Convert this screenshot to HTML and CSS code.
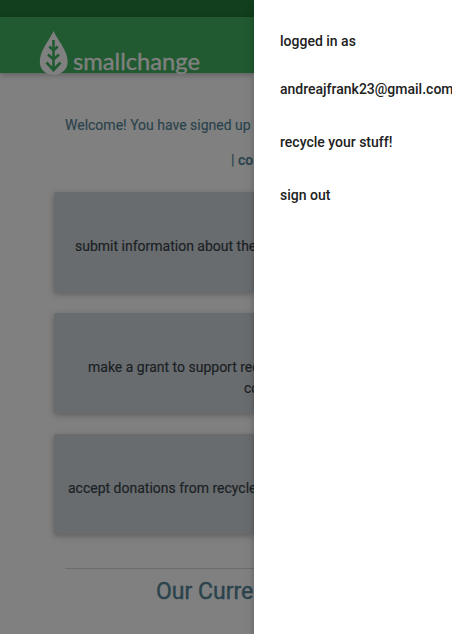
FILE: index.html
```html
<!DOCTYPE html>
<html lang="en">
<head>
<meta charset="utf-8">
<title>smallchange</title>
<link rel="stylesheet" href="styles.css">
</head>
<body>
<div class="page">
  <div class="status-bar"></div>
  <header class="navbar">
    <svg class="logo" width="170" height="50" viewBox="0 0 170 50">
      <path class="leaf" d="M14.500 1C12 8 .8 20 .8 31.500C.8 40 7 44.800 14.500 44.800S28.700 40 28.700 31.500C28.700 20 17 8 14.500 1Z"/>
      <path class="veins" d="M14.500 10V39M10.300 16.500L14.500 20.500L18.700 16.500M9 24.500L14.500 29.500L20 24.500M7.500 32.500L14.500 40L21.500 32.500"/>
      <text class="wordmark" x="34" y="39.500" textLength="127" lengthAdjust="spacingAndGlyphs">smallchange</text>
    </svg>
  </header>
  <main class="content">
    <p class="notice">Welcome! You have signed up</p>
    <p class="links">| <b>co</b></p>
    <div class="card"><p class="submit">submit information about the</p></div>
    <div class="card"><p class="grant">make a grant to support rec</p><p class="grant-more">co</p></div>
    <div class="card"><p class="accept">accept donations from recycle</p></div>
    <hr class="rule">
    <h5 class="heading">Our Curre</h5>
  </main>
</div>
<nav class="drawer">
  <span class="label">logged in as</span>
  <a class="item">andreajfrank23@gmail.com</a>
  <a class="item">recycle your stuff!</a>
  <a class="item">sign out</a>
</nav>
</body>
</html>
```
FILE: styles.css
```css
* { box-sizing: border-box; }
body {
  margin: 0;
  height: 634px;
  overflow: hidden;
  display: flex;
  font: 14px/21px Roboto, sans-serif;
  background: #808080;
}
p, h5 { margin: 0; white-space: nowrap; }
.page { width: 254px; flex: none; height: 634px; overflow: hidden; }
.status-bar { height: 17px; background: #123f1e; }
.navbar {
  height: 56px;
  padding: 13px 0 0 39px;
  background: #215a30;
  box-shadow: 0 2px 5px rgba(0,0,0,.16), 0 1px 6px rgba(0,0,0,.12);
}
.logo { display: block; overflow: visible; }
.leaf { fill: #808080; }
.veins { fill: none; stroke: #215a30; stroke-width: 2.6; }
.wordmark { fill: #808080; font: 400 23px Lato, sans-serif; stroke: #808080; stroke-width: .4; }
.content { padding: 42px 0 0 54px; color: #2a434c; -webkit-text-stroke: .15px; }
.notice { padding-left: 11px; }
.links { padding: 14px 0 0 177px; }
.links b { font-weight: 500; }
.card {
  height: 100px;
  margin-bottom: 21px;
  padding-top: 44px;
  background: #686c6f;
  color: #1b2023;
  border-radius: 2px 0 0 2px;
  box-shadow: 0 2px 5px rgba(0,0,0,.16), 0 2px 8px rgba(0,0,0,.12);
}
.links + .card { margin-top: 21px; }
.submit { padding-left: 21px; }
.grant { padding-left: 34px; }
.grant-more { padding-left: 190px; }
.accept { padding-left: 14px; }
.rule { margin: 34px 0 0 11px; border: 0; border-top: 1px solid #6c6c6c; }
.heading { padding: 9px 0 0 102px; font-size: 23px; line-height: 28px; font-weight: 400; -webkit-text-stroke: .4px; }
.drawer {
  width: 198px;
  flex: none;
  height: 634px;
  position: relative;
  padding: 31px 0 0 26px;
  background: #fff;
  color: #212121;
  font-size: 14px;
  font-weight: 500;
  white-space: nowrap;
  box-shadow: 0 2px 5px rgba(0,0,0,.16), 0 2px 10px rgba(0,0,0,.12);
}
.label { display: block; height: 32px; }
.item { display: block; line-height: 53px; }
```
